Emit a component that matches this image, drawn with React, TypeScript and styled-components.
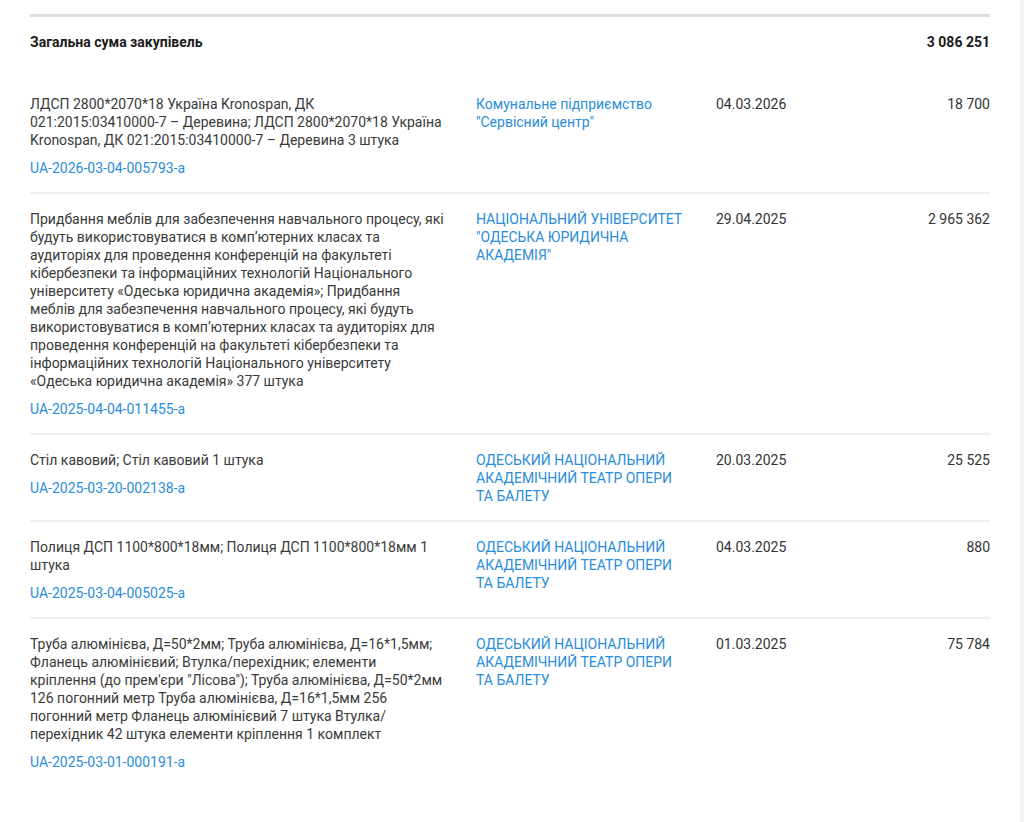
import React from "react";
import styled, { createGlobalStyle } from "styled-components";

const Global = createGlobalStyle`
  html, body { margin: 0; padding: 0; background: #f4f4f6; }
  body { font-family: Roboto, "Noto Sans", Arial, sans-serif; -webkit-font-smoothing: antialiased; }
  * { box-sizing: border-box; }
`;

const Page = styled.div`
  width: 1020px;
  min-height: 822px;
  background: #ffffff;
  padding: 14px 30px 40px 30px;
`;

const Table = styled.div`
  border-top: 3px solid #dedede;
`;

const Grid = styled.div`
  display: grid;
  grid-template-columns: 446px 240px 1fr 1fr;
  font-size: 14px;
  line-height: 18px;
`;

const TotalRow = styled(Grid)`
  padding: 16px 0 28px;
  font-weight: 700;
  color: #1b1b1b;
`;

const Row = styled(Grid)<{ $last?: boolean }>`
  padding: 16px 0 15px;
  border-bottom: ${(p) => (p.$last ? "none" : "2px solid #efefef")};
`;

const Cell = styled.div<{ $right?: boolean; $span?: number; $gap?: number }>`
  text-align: ${(p) => (p.$right ? "right" : "left")};
  grid-column: ${(p) => (p.$span ? `span ${p.$span}` : "auto")};
  padding-right: ${(p) => p.$gap ?? 0}px;
`;

const Desc = styled.div`
  color: #3a3a3a;
`;

const Link = styled.a`
  display: block;
  color: #2a8ddb;
  text-decoration: none;
  cursor: pointer;
`;

const IdLink = styled(Link)`
  margin-top: 10px;
`;

const Plain = styled.div`
  color: #333333;
`;

type Item = {
  desc: string;
  id: string;
  buyer: string;
  date: string;
  amount: string;
};

const items: Item[] = [
  {
    desc: "ЛДСП 2800*2070*18 Україна Kronospan, ДК 021:2015:03410000-7 – Деревина; ЛДСП 2800*2070*18 Україна Kronospan, ДК 021:2015:03410000-7 – Деревина 3 штука",
    id: "UA-2026-03-04-005793-a",
    buyer: "Комунальне підприємство \"Сервісний центр\"",
    date: "04.03.2026",
    amount: "18 700",
  },
  {
    desc: "Придбання меблів для забезпечення навчального процесу, які будуть використовуватися в комп’ютерних класах та аудиторіях для проведення конференцій на факультеті кібербезпеки та інформаційних технологій Національного університету «Одеська юридична академія»; Придбання меблів для забезпечення навчального процесу, які будуть використовуватися в комп’ютерних класах та аудиторіях для проведення конференцій на факультеті кібербезпеки та інформаційних технологій Національного університету «Одеська юридична академія» 377 штука",
    id: "UA-2025-04-04-011455-a",
    buyer: "НАЦІОНАЛЬНИЙ УНІВЕРСИТЕТ \"ОДЕСЬКА ЮРИДИЧНА АКАДЕМІЯ\"",
    date: "29.04.2025",
    amount: "2 965 362",
  },
  {
    desc: "Стіл кавовий; Стіл кавовий 1 штука",
    id: "UA-2025-03-20-002138-a",
    buyer: "ОДЕСЬКИЙ НАЦІОНАЛЬНИЙ АКАДЕМІЧНИЙ ТЕАТР ОПЕРИ ТА БАЛЕТУ",
    date: "20.03.2025",
    amount: "25 525",
  },
  {
    desc: "Полиця ДСП 1100*800*18мм; Полиця ДСП 1100*800*18мм 1 штука",
    id: "UA-2025-03-04-005025-a",
    buyer: "ОДЕСЬКИЙ НАЦІОНАЛЬНИЙ АКАДЕМІЧНИЙ ТЕАТР ОПЕРИ ТА БАЛЕТУ",
    date: "04.03.2025",
    amount: "880",
  },
  {
    desc: "Труба алюмінієва, Д=50*2мм; Труба алюмінієва, Д=16*1,5мм; Фланець алюмінієвий; Втулка/перехідник; елементи кріплення (до прем'єри \"Лісова\"); Труба алюмінієва, Д=50*2мм 126 погонний метр Труба алюмінієва, Д=16*1,5мм 256 погонний метр Фланець алюмінієвий 7 штука Втулка/перехідник 42 штука елементи кріплення 1 комплект",
    id: "UA-2025-03-01-000191-a",
    buyer: "ОДЕСЬКИЙ НАЦІОНАЛЬНИЙ АКАДЕМІЧНИЙ ТЕАТР ОПЕРИ ТА БАЛЕТУ",
    date: "01.03.2025",
    amount: "75 784",
  },
];

export default function App() {
  return (
    <>
      <Global />
      <Page>
        <Table>
          <TotalRow>
            <Cell $span={3}>Загальна сума закупівель</Cell>
            <Cell $right>3 086 251</Cell>
          </TotalRow>
          {items.map((it, i) => (
            <Row key={it.id} $last={i === items.length - 1}>
              <Cell $gap={32}>
                <Desc>{it.desc}</Desc>
                <IdLink>{it.id}</IdLink>
              </Cell>
              <Cell $gap={30}>
                <Link>{it.buyer}</Link>
              </Cell>
              <Cell>
                <Plain>{it.date}</Plain>
              </Cell>
              <Cell $right>
                <Plain>{it.amount}</Plain>
              </Cell>
            </Row>
          ))}
        </Table>
      </Page>
    </>
  );
}
